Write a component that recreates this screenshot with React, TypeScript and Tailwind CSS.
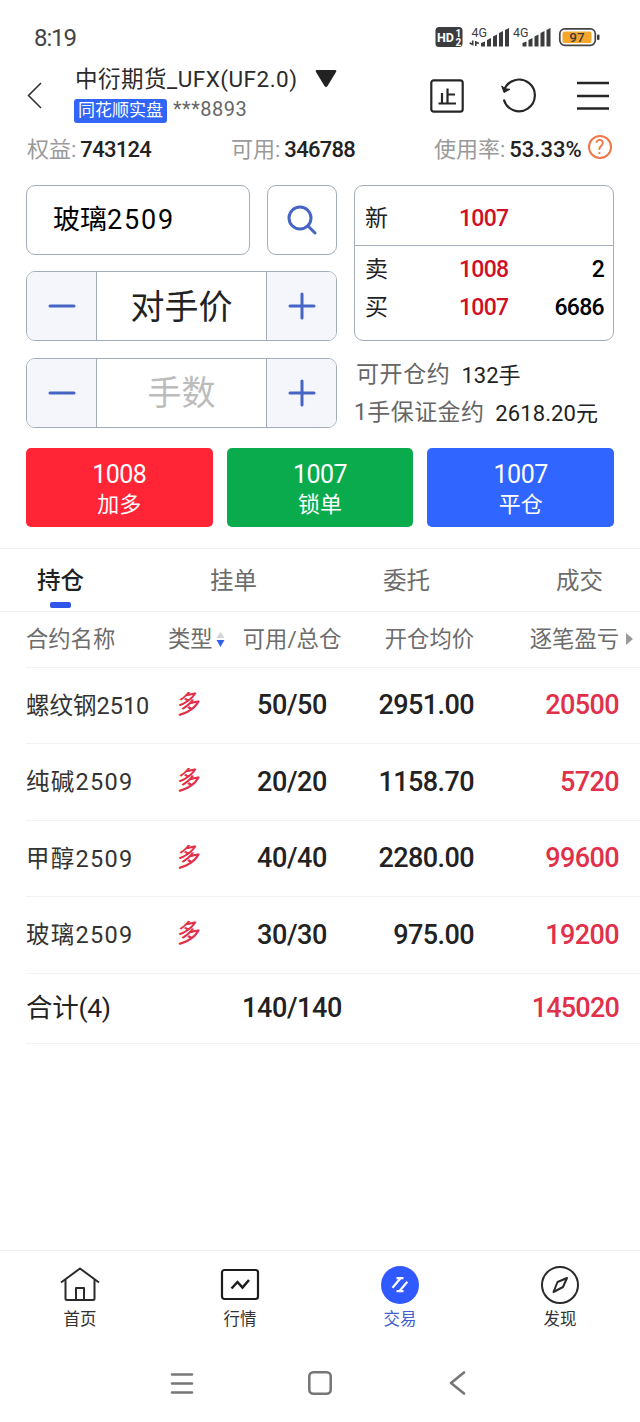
import { useState } from 'react'
import clsx from 'clsx'

interface Position {
  name: string
  available: string
  price: string
  profit: string
}

const positions: Position[] = [
  { name: '螺纹钢2510', available: '50/50', price: '2951.00', profit: '20500' },
  { name: '纯碱2509', available: '20/20', price: '1158.70', profit: '5720' },
  { name: '甲醇2509', available: '40/40', price: '2280.00', profit: '99600' },
  { name: '玻璃2509', available: '30/30', price: '975.00', profit: '19200' },
]

const orderButtons = [
  { price: '1008', label: '加多', color: 'bg-[#ff2436]' },
  { price: '1007', label: '锁单', color: 'bg-[#09ab4d]' },
  { price: '1007', label: '平仓', color: 'bg-[#3065ff]' },
]

const tabs = ['持仓', '挂单', '委托', '成交']

const rowGrid = 'ml-[26px] grid grid-cols-[142px_58px_132px_116px_145px_1fr] items-center border-b border-[#f3f3f4]'

function StatusBar() {
  return (
    <div className="flex h-[62px] items-center justify-between pt-[13px] pr-[40px] pl-[34px]">
      <span className="text-[24px] leading-6 tracking-[-1.1px] text-[#444]">8:19</span>
      <svg width="165" height="36" viewBox="435 20 165 36" fill="#3c3c3e">
        <rect x="435.5" y="27" width="27" height="20" rx="3.5" />
        <text x="437" y="42" fontSize="13" fontWeight="700" fill="#fff" textLength="17" lengthAdjust="spacingAndGlyphs">HD</text>
        <text x="455.5" y="36.5" fontSize="10" fontWeight="700" fill="#fff">1</text>
        <text x="455.5" y="45.5" fontSize="10" fontWeight="700" fill="#fff">2</text>
        <text x="471.5" y="36.5" fontSize="12" textLength="15.5" lengthAdjust="spacingAndGlyphs">4G</text>
        <path d="M472.7 40.5v4l-3-1.5M475.8 46v-4l3 1.5" fill="none" stroke="#3c3c3e" strokeWidth="1.6" />
        <path d="M481 43l4-1.5v5h-4zM487 40l4-2v8.5h-4zM493 36.5l4-2v12h-4zM499 33l4-2v15.5h-4zM505 30l4-2v18.5h-4z" />
        <text x="513" y="36.5" fontSize="12" textLength="15.5" lengthAdjust="spacingAndGlyphs">4G</text>
        <path d="M522.5 43l4-1.5v5h-4zM528.5 40l4-2v8.5h-4zM534.5 36.5l4-2v12h-4zM540.5 33l4-2v15.5h-4zM546.5 30l4-2v18.5h-4z" />
        <rect x="559.8" y="28.8" width="35.5" height="16.5" rx="5" fill="#fff" stroke="#444" strokeWidth="1.7" />
        <rect x="562.5" y="31.5" width="29" height="11.5" rx="2" fill="#f6a62b" />
        <rect x="597" y="34.5" width="2.5" height="5.5" rx="1" />
        <text x="577" y="42" fontSize="13.5" fontWeight="500" textAnchor="middle">97</text>
      </svg>
    </div>
  )
}

function Header() {
  return (
    <header className="flex h-[67px] items-center pr-[31px] pl-[27px]">
      <svg className="-mt-[2px]" width="16" height="28" viewBox="0 0 16 28" fill="none" stroke="#333" strokeWidth="1.6">
        <path d="M14 2 1.5 14.5 14 27" />
      </svg>
      <div className="-mt-[4px] ml-[31px] flex w-[356px] flex-col">
        <div className="flex h-[34px] items-center pb-[3px]">
          <span className="ml-[1px] text-[22.5px] tracking-[0.5px] whitespace-nowrap text-[#2b2b2b]">中衍期货_UFX(UF2.0)</span>
          <svg className="mb-[2px] ml-[17px]" width="22" height="18" viewBox="0 0 22 18" fill="#222">
            <path d="M2 0h18q2 0 1 2l-8.5 14q-1.5 2-3 0L1 2Q0 0 2 0z" />
          </svg>
        </div>
        <div className="flex h-[24px] items-center">
          <span className="flex h-[24px] w-[93px] items-center justify-center rounded-[3px] bg-[#3065f5] text-[17px] text-white">
            同花顺实盘
          </span>
          <span className="mb-[4px] ml-[6px] text-[20px] leading-5 tracking-[0.5px] text-[#666]">***8893</span>
        </div>
      </div>
      <svg width="34" height="34" viewBox="0 0 34 34" fill="none" stroke="#262626" strokeWidth="2.2">
        <rect x="1.3" y="1.3" width="31.4" height="31.4" rx="2.5" />
        <path d="M17.5 9.5v15M12 14v10.5M17.5 15.5H25M8.5 24.5h17.5" />
      </svg>
      <svg className="ml-[36px]" width="38" height="36" viewBox="0 0 38 36" fill="none" stroke="#262626" strokeWidth="2.2">
        <path d="M4.2 12A15.8 15.8 0 1 1 3.8 21.5" />
        <path d="M1.7 8l2.3 6.5 6-3.2-4.5-.5z" fill="#262626" strokeWidth="1" />
      </svg>
      <svg className="ml-auto" width="32" height="30" viewBox="0 0 32 30" stroke="#262626" strokeWidth="2.3">
        <path d="M0 2h32M0 15h32M0 27.5h32" />
      </svg>
    </header>
  )
}

function AccountStats() {
  return (
    <div className="flex h-[40px] items-center pl-[27px] text-[22px] text-[#9a9a9a]">
      <span className="w-[204px] whitespace-nowrap">
        权益:<b className="ml-[4px] font-medium tracking-[-0.7px] text-[#222]">743124</b>
      </span>
      <span className="w-[203px] whitespace-nowrap">
        可用:<b className="ml-[4px] font-medium tracking-[-0.7px] text-[#222]">346788</b>
      </span>
      <span className="whitespace-nowrap">
        使用率:<b className="ml-[4px] font-medium text-[#222]">53.33%</b>
      </span>
      <span className="mb-[4px] ml-[6px] flex size-[24px] shrink-0 items-center justify-center rounded-full border-2 border-[#ee7848] text-[20px] leading-none text-[#ee7848]">
        ?
      </span>
    </div>
  )
}

function Stepper({ children }: { children: React.ReactNode }) {
  return (
    <div className="flex h-[70px] overflow-hidden rounded-[9px] border border-[#a3adba]">
      <button className="flex w-[70px] items-center justify-center border-r border-[#a3adba] bg-[#f4f6fb]">
        <svg width="28" height="28" viewBox="0 0 28 28" stroke="#4564c4" strokeWidth="3" strokeLinecap="round">
          <path d="M2 14h24" />
        </svg>
      </button>
      <div className="flex flex-1 items-center justify-center pt-[2px] text-[34px]">{children}</div>
      <button className="flex w-[70px] items-center justify-center border-l border-[#a3adba] bg-[#f4f6fb]">
        <svg width="28" height="28" viewBox="0 0 28 28" stroke="#4564c4" strokeWidth="3" strokeLinecap="round">
          <path d="M2 14h24M14 2v24" />
        </svg>
      </button>
    </div>
  )
}

function QuoteRow({ label, price, volume }: { label: string; price: string; volume?: string }) {
  return (
    <div className="flex h-[38px] items-center text-[23px]">
      <span className="w-[94px] text-[#222]">{label}</span>
      <span className="font-medium tracking-[-0.7px] text-[#cf1127]">{price}</span>
      <span className="ml-auto font-medium tracking-[-0.7px] text-black">{volume}</span>
    </div>
  )
}

function OrderForm() {
  return (
    <section className="flex h-[259px] gap-[17px] px-[26px] pt-[16px]">
      <div className="flex w-[311px] flex-col gap-[16.4px]">
        <div className="flex gap-[17px]">
          <div className="flex h-[70px] flex-1 items-center rounded-[9px] border border-[#a3adba] pl-[26px] text-[27px] text-black">
            玻璃<span className="tracking-[1.8px]">2509</span>
          </div>
          <button className="flex size-[70px] items-center justify-center rounded-[9px] border border-[#a3adba]">
            <svg width="30" height="30" viewBox="0 0 30 30" fill="none" stroke="#4564c4" strokeWidth="3" strokeLinecap="round">
              <circle cx="13" cy="13" r="11" />
              <path d="M21 21l7 7" />
            </svg>
          </button>
        </div>
        <Stepper>
          <span className="text-[#222]">对手价</span>
        </Stepper>
        <Stepper>
          <span className="text-[#bcbcbc]">手数</span>
        </Stepper>
      </div>
      <div className="w-[260px]">
        <div className="h-[156px] rounded-[9px] border border-[#a3adba]">
          <div className="flex h-[60px] flex-col justify-end border-b border-[#a3adba] pr-[9px] pb-[7px] pl-[10px]">
            <QuoteRow label="新" price="1007" />
          </div>
          <div className="pt-[5.5px] pr-[9px] pl-[10px]">
            <QuoteRow label="卖" price="1008" volume="2" />
            <QuoteRow label="买" price="1007" volume="6686" />
          </div>
        </div>
        <div className="mt-[15px] ml-[2px] flex h-[38px] items-center text-[23px] tracking-[0.6px] whitespace-nowrap text-[#666]">
          可开仓约<span className="ml-[11px] text-[22px] tracking-normal text-[#222]">132手</span>
        </div>
        <div className="flex h-[38px] items-center text-[23px] tracking-[0.4px] whitespace-nowrap text-[#666]">
          1手保证金约<span className="ml-[11px] text-[22px] tracking-[0.1px] text-[#222]">2618.20元</span>
        </div>
      </div>
    </section>
  )
}

function PositionTable() {
  return (
    <section>
      <div className={clsx(rowGrid, 'h-[55.5px] text-[22.3px] text-[#6c6c6c]')}>
        <span>合约名称</span>
        <span className="flex items-center gap-[3px]">
          类型
          <svg className="shrink-0" width="9" height="15" viewBox="0 0 9 15">
            <path d="M4.5 0 8.5 6h-8z" fill="#d3d3d3" />
            <path d="M4.5 15 .5 8h8z" fill="#3460ea" />
          </svg>
        </span>
        <span className="text-center">可用/总仓</span>
        <span className="text-right">开仓均价</span>
        <span className="text-right">逐笔盈亏</span>
        <svg className="ml-[7px]" width="7" height="12" viewBox="0 0 7 12" fill="#999">
          <path d="M0 0l7 6-7 6z" />
        </svg>
      </div>
      {positions.map((position) => (
        <div key={position.name} className={clsx(rowGrid, 'h-[76.5px] text-[27px] font-medium text-[#222]')}>
          <span
            className={clsx(
              'pt-[2px] text-[23.5px] font-normal text-[#333]',
              position.name.length === 6 && 'tracking-[1.3px]'
            )}
          >
            {position.name}
          </span>
          <span className="mb-[3px] ml-[9px] w-[24px] -skew-y-12 text-[24px] text-[#e1304a]">多</span>
          <span className="text-center tracking-[-0.4px]">{position.available}</span>
          <span className="text-right tracking-[-0.6px]">{position.price}</span>
          <span className="text-right tracking-[-0.6px] text-[#e1304a]">{position.profit}</span>
        </div>
      ))}
      <div className={clsx(rowGrid, 'h-[70px] text-[27px] font-medium text-[#222]')}>
        <span className="text-[26.5px] font-normal tracking-[-0.3px]">合计(4)</span>
        <span />
        <span className="text-center tracking-[-0.4px]">140/140</span>
        <span />
        <span className="text-right tracking-[-0.8px] text-[#e1304a]">145020</span>
      </div>
    </section>
  )
}

const navItems = [
  {
    label: '首页',
    icon: (
      <g stroke="#2a2a2a" strokeWidth="2" strokeLinejoin="round">
        <path d="M1 16.5 20 2.5 39 16.5" />
        <path d="M5.5 13.5v19q0 1.500 1.500 1.500h26q1.500 0 1.500-1.500v-19M16 34V22h8v12" />
      </g>
    ),
  },
  {
    label: '行情',
    icon: (
      <g stroke="#1c1c1c" strokeWidth="2.2">
        <rect x="2" y="4" width="36" height="29" rx="2.5" />
        <path d="M11.5 22.5l6-6.5 5 5.5 6.5-7.5" strokeWidth="2.5" />
      </g>
    ),
  },
  {
    label: '交易',
    icon: (
      <>
        <circle cx="20" cy="19" r="19" fill="#3059ff" />
        <path d="M12.5 21.8 20.5 12.2M16.5 12.2H23.500M27.300 15.800 19.300 25.200M16.500 25.200H23.500" stroke="#fff" strokeWidth="2.2" />
      </>
    ),
  },
  {
    label: '发现',
    icon: (
      <g stroke="#2a2a2a" strokeWidth="2">
        <circle cx="20" cy="19" r="18" />
        <path d="M27 12 17.5 16 13.500 26 23 21z" strokeLinejoin="round" />
      </g>
    ),
  },
]

function BottomNav() {
  return (
    <nav className="mt-auto grid h-[95px] grid-cols-4 border-t border-[#f0f0f1] pt-[15px]">
      {navItems.map((item) => (
        <div key={item.label} className="flex flex-col items-center">
          <svg width="40" height="38" viewBox="0 0 40 38" fill="none">{item.icon}</svg>
          <span className={clsx('mt-[4px] text-[16.5px] leading-[24px]', item.label === '交易' ? 'text-[#3f5fd0]' : 'text-[#333]')}>
            {item.label}
          </span>
        </div>
      ))}
    </nav>
  )
}

export default function App() {
  const [activeTab, setActiveTab] = useState('持仓')

  return (
    <div className="flex h-[1422px] w-[640px] flex-col overflow-hidden bg-white font-[Roboto,'Noto_Sans_CJK_SC',sans-serif]">
      <StatusBar />
      <Header />
      <AccountStats />
      <OrderForm />

      <div className="mt-[20px] grid grid-cols-3 gap-[14px] px-[26px]">
        {orderButtons.map((button) => (
          <button
            key={button.label}
            className={clsx('flex h-[79px] flex-col items-center justify-center rounded-[5px] pt-[5px] text-white', button.color)}
          >
            <span className="text-[25px] leading-[30px] tracking-[-0.5px]">{button.price}</span>
            <span className="text-[22px] leading-[30px]">{button.label}</span>
          </button>
        ))}
      </div>

      <div className="mt-[21px] flex h-[64px] justify-between border-y border-[#f0f0f1] px-[37px]">
        {tabs.map((tab) => (
          <button
            key={tab}
            onClick={() => setActiveTab(tab)}
            className={clsx(
              'flex flex-col items-center pt-[14px] text-[23.5px] leading-[36px]',
              activeTab === tab ? 'font-medium text-[#222]' : 'text-[#6c6c6c]'
            )}
          >
            {tab}
            {activeTab === tab && <span className="mt-[3px] h-[6px] w-[21px] rounded-[2px] bg-[#3056ea]" />}
          </button>
        ))}
      </div>

      <PositionTable />
      <BottomNav />

      <div className="flex h-[77px] items-start justify-center gap-[114px] pt-[26px]">
        <svg width="24" height="24" viewBox="0 0 24 24" stroke="#777" strokeWidth="2.6" strokeLinecap="round">
          <path d="M2 3.5h20M2 12.5h20M2 21.5h20" />
        </svg>
        <svg width="24" height="24" viewBox="0 0 24 24" fill="none" stroke="#777" strokeWidth="2.6">
          <rect x="1.3" y="1.3" width="21.4" height="21.4" rx="4" />
        </svg>
        <svg width="24" height="24" viewBox="0 0 24 24" fill="none" stroke="#777" strokeWidth="2.6" strokeLinecap="round" strokeLinejoin="round">
          <path d="M18 1.5 5 12l13 10.5" />
        </svg>
      </div>
    </div>
  )
}
